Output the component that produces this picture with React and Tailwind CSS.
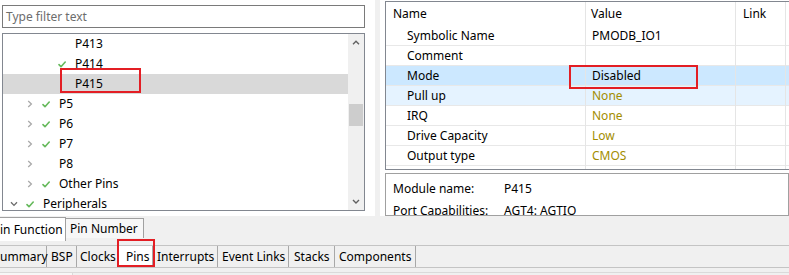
import React from 'react';

const treeRows = [
  { label: 'P413', level: 2, check: false, chevron: null },
  { label: 'P414', level: 2, check: true, chevron: null },
  { label: 'P415', level: 2, check: false, chevron: null, selected: true },
  { label: 'P5', level: 1, check: true, chevron: 'right' },
  { label: 'P6', level: 1, check: true, chevron: 'right' },
  { label: 'P7', level: 1, check: true, chevron: 'right' },
  { label: 'P8', level: 1, check: false, chevron: 'right' },
  { label: 'Other Pins', level: 1, check: true, chevron: 'right' },
  { label: 'Peripherals', level: 0, check: true, chevron: 'down' },
];

const indent = { 0: 'pl-[3px]', 1: 'pl-[19px]', 2: 'pl-[35px]' };

const props = [
  { name: 'Symbolic Name', value: 'PMODB_IO1' },
  { name: 'Comment', value: '' },
  { name: 'Mode', value: 'Disabled', bg: 'bg-[#cce8ff]' },
  { name: 'Pull up', value: 'None', dim: true, bg: 'bg-[#e5f3ff]' },
  { name: 'IRQ', value: 'None', dim: true },
  { name: 'Drive Capacity', value: 'Low', dim: true },
  { name: 'Output type', value: 'CMOS', dim: true },
  { name: '', value: '' },
];

const bottomTabs = [
  { label: 'ummary', w: 'w-[47px]', pl: 'pl-0' },
  { label: 'BSP', w: 'w-[30px]', pl: 'pl-[4px]' },
  { label: 'Clocks', w: 'w-[41px]', pl: 'pl-[3px]' },
  { label: 'Pins', w: 'w-[35px]', pl: 'pl-[8px]', active: true },
  { label: 'Interrupts', w: 'w-[65px]', pl: 'pl-[4px]' },
  { label: 'Event Links', w: 'w-[71px]', pl: 'pl-[4px]' },
  { label: 'Stacks', w: 'w-[46px]', pl: 'pl-[5px]' },
  { label: 'Components', w: 'w-[81px]', pl: 'pl-[4px]' },
];

function Check() {
  return (
    <svg width="8" height="7" viewBox="0 0 8 7">
      <path d="M1 3.6 L3 5.7 L7.2 1" fill="none" stroke="#65b95b" strokeWidth="1.6" strokeLinecap="round" strokeLinejoin="round" />
    </svg>
  );
}

function Chevron({ dir }) {
  if (dir === 'down') {
    return (
      <svg width="8" height="6" viewBox="0 0 8 6">
        <path d="M1 1.2 L4 4.4 L7 1.2" fill="none" stroke="#6b6b6b" strokeWidth="1.3" />
      </svg>
    );
  }
  return (
    <svg width="6" height="8" viewBox="0 0 6 8">
      <path d="M1.2 1 L4.4 4 L1.2 7" fill="none" stroke="#a9a9a9" strokeWidth="1.3" />
    </svg>
  );
}

function Arrow({ up }) {
  return (
    <svg width="8" height="5" viewBox="0 0 8 5">
      <path d={up ? 'M1 4.2 L4 1.2 L7 4.2' : 'M1 1 L4 4 L7 1'} fill="none" stroke="#606060" strokeWidth="1.4" />
    </svg>
  );
}

function TreeRow({ row }) {
  return (
    <div className={`flex items-center h-[20px] ${indent[row.level]} ${row.selected ? 'bg-[#d9d9d9]' : ''}`}>
      <span className="w-[16px] flex justify-center">{row.chevron && <Chevron dir={row.chevron} />}</span>
      <span className="w-[16px] flex justify-center">{row.check && <Check />}</span>
      <span className="ml-[5px] text-black">{row.label}</span>
    </div>
  );
}

export default function App() {
  return (
    <div className="relative w-[789px] h-[275px] overflow-hidden bg-white text-[12px] leading-[20px] font-['Noto_Sans',sans-serif] text-black">
      <div className="flex h-[216px]">
        <div className="w-[365px] shrink-0 pl-[2px] pt-[5px]">
          <div className="h-[23px] border border-[#7a7a7a] flex items-center pl-[3px] text-[#6d6d6d]">
            Type filter text
          </div>
          <div className="mt-[5px] h-[178px] border border-[#828790] flex overflow-hidden">
            <div className="flex-1">
              {treeRows.map((r) => (
                <TreeRow key={r.label} row={r} />
              ))}
            </div>
            <div className="w-[16px] bg-[#f0f0f0] flex flex-col">
              <div className="h-[17px] flex items-center justify-center">
                <Arrow up />
              </div>
              <div className="flex-1">
                <div className="mt-[53px] mx-[1px] h-[22px] bg-[#cdcdcd]" />
              </div>
              <div className="h-[17px] flex items-center justify-center">
                <Arrow />
              </div>
            </div>
          </div>
        </div>

        <div className="w-[20px] shrink-0 pl-[10px] pr-[5px]">
          <div className="h-full bg-[#f0f0f0]" />
        </div>

        <div className="flex-1 min-w-0 pt-[1px] flex flex-col">
          <div className="h-[169px] border-t border-l border-b border-[#828790] overflow-hidden">
            <div className="grid grid-cols-[200px_150px_50px_1fr] h-[24px] items-center">
              <div className="h-full flex items-center pl-[7px] border-r border-[#e5e5e5]">Name</div>
              <div className="h-full flex items-center pl-[5px] border-r border-[#e5e5e5]">Value</div>
              <div className="h-full flex items-center pl-[7px] border-r border-[#e5e5e5]">Link</div>
              <div />
            </div>
            {props.map((p, i) => (
              <div key={i} className={`grid grid-cols-[200px_150px_50px_1fr] h-[20px] border-b border-[#e8e8e8] ${p.bg || ''}`}>
                <div className="pl-[21px] border-r border-[#e5e5e5]">{p.name}</div>
                <div className={`pl-[6px] border-r border-[#e5e5e5] ${p.dim ? 'text-[#a38d00]' : ''}`}>{p.value}</div>
                <div className="border-r border-[#e5e5e5]" />
                <div />
              </div>
            ))}
          </div>
          <div className="mt-[3px] h-[43px] border border-[#a0a0a0] overflow-hidden pl-[7px] pt-[4px]">
            <div className="flex h-[22px] items-center">
              <span className="w-[111px]">Module name:</span>
              <span>P415</span>
            </div>
            <div className="flex h-[22px] items-center">
              <span className="w-[111px]">Port Capabilities:</span>
              <span>AGT4: AGTIO</span>
            </div>
          </div>
        </div>
      </div>

      <div className="h-[59px] bg-[#f0f0f0] flex flex-col">
        <div className="h-[29px] flex items-start pt-[1px]">
          <div className="w-[66px] h-[24px] border-t border-r border-[#a0a0a0] bg-white flex items-center">
            in Function
          </div>
          <div className="w-[78px] h-[20px] mt-[1px] border-t border-r border-[#a0a0a0] bg-[#f7f7f7] flex items-center pl-[4px]">
            Pin Number
          </div>
        </div>
        <div className="h-[23px] border-t border-b border-[#c4c4c4] flex">
          {bottomTabs.map((t) => (
            <div
              key={t.label}
              className={`${t.w} ${t.pl} shrink-0 h-full flex items-center border-r border-[#a8a8a8] whitespace-nowrap ${t.active ? 'bg-white' : ''}`}
            >
              {t.label}
            </div>
          ))}
        </div>
        <div className="mt-[4px] flex-1 border-t border-[#dadada] flex">
          <div className="w-[73px] border-r border-[#dadada] bg-[#f7f7f7]" />
        </div>
      </div>

      <div className="absolute left-[60px] top-[68px] w-[81px] h-[25px] border-2 border-[#e31e24]" />
      <div className="absolute left-[569px] top-[65px] w-[129px] h-[24px] border-2 border-[#e31e24]" />
      <div className="absolute left-[117px] top-[239px] w-[38px] h-[28px] border-2 border-[#e31e24]" />
    </div>
  );
}
